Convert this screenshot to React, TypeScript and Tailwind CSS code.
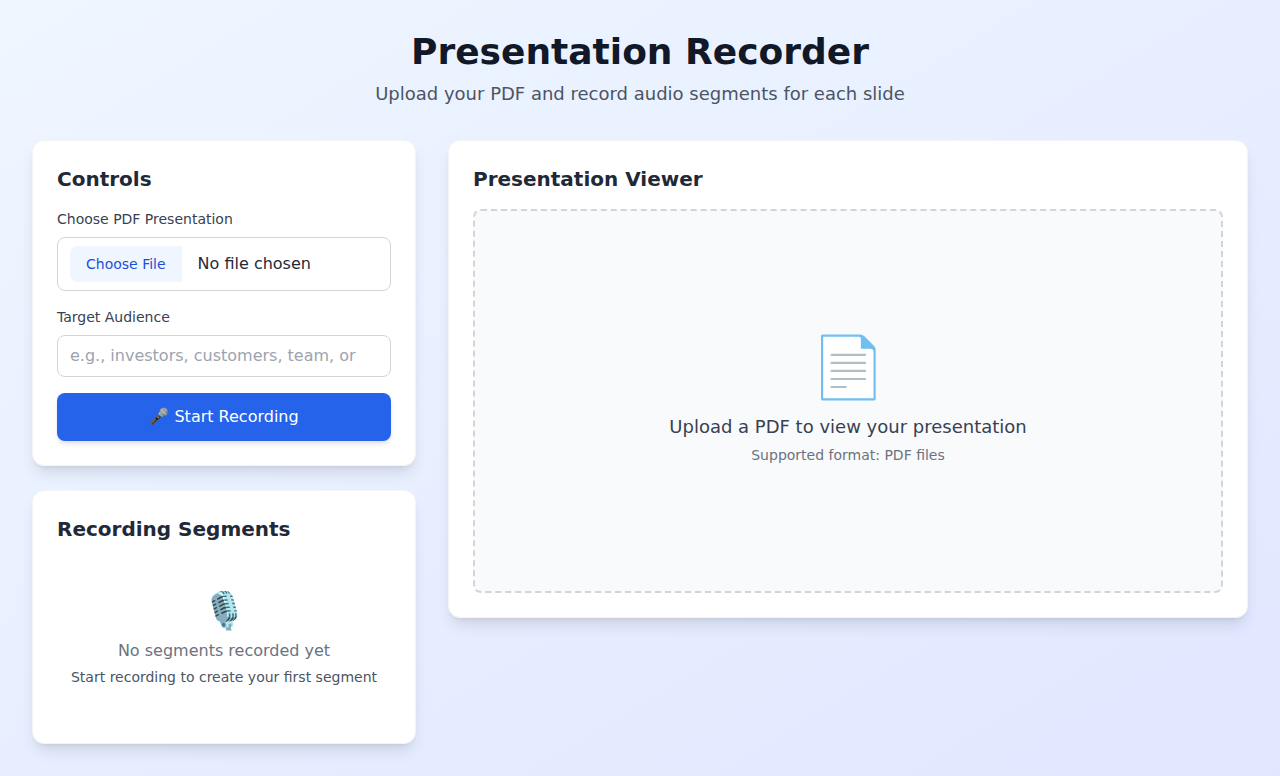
import React from 'react';

const card = 'rounded-xl border border-[#f3f4f6] bg-white p-6 shadow-lg';
const heading = 'mb-4 text-xl font-semibold text-[#1f2937]';
const label = 'mb-2 block text-sm font-medium text-[#374151]';

export default function App() {
  return (
    <div className="min-h-screen bg-[linear-gradient(to_bottom_right,#eff6ff,#e0e7ff)] font-['DejaVu_Sans',sans-serif] text-[#111827]">
      <div className="mx-auto max-w-7xl px-8 py-8">
        <header className="mb-8 text-center">
          <h1 className="mb-2 text-4xl font-bold">Presentation Recorder</h1>
          <p className="text-lg text-[#4b5563]">Upload your PDF and record audio segments for each slide</p>
        </header>
        <div className="grid grid-cols-3 items-start gap-8">
          <div className="space-y-6">
            <section className={card}>
              <h2 className={heading}>Controls</h2>
              <div className="space-y-4">
                <div>
                  <label htmlFor="pdf" className={label}>Choose PDF Presentation</label>
                  <input
                    id="pdf"
                    type="file"
                    accept="application/pdf"
                    className="block w-full rounded-lg border border-[#d1d5db] px-3 py-2 text-[#1f2937] file:mr-4 file:rounded-l-lg file:border-0 file:bg-[#eff6ff] file:px-4 file:py-2 file:text-sm file:font-medium file:text-[#1d4ed8]"
                  />
                </div>
                <div>
                  <label htmlFor="audience" className={label}>Target Audience</label>
                  <input
                    id="audience"
                    type="text"
                    placeholder="e.g., investors, customers, team, or"
                    className="block w-full rounded-lg border border-[#d1d5db] px-3 py-2 placeholder:text-[#9ca3af]"
                  />
                </div>
                <button className="w-full rounded-lg bg-[#2563eb] px-4 py-3 font-medium text-white shadow-md">🎤 Start Recording</button>
              </div>
            </section>
            <section className={card}>
              <h2 className={heading}>Recording Segments</h2>
              <div className="py-8 text-center text-[#6b7280]">
                <div className="mb-2 text-4xl">🎙️</div>
                <p>No segments recorded yet</p>
                <p className="mt-1 text-sm text-[#4b5563]">Start recording to create your first segment</p>
              </div>
            </section>
          </div>
          <section className={`${card} col-span-2`}>
            <h2 className={heading}>Presentation Viewer</h2>
            <div className="flex h-96 items-center justify-center rounded-lg border-2 border-dashed border-[#d1d5db] bg-[#f9fafb]">
              <div className="text-center">
                <div className="mb-4 text-6xl">📄</div>
                <p className="text-lg text-[#374151]">Upload a PDF to view your presentation</p>
                <p className="mt-1 text-sm text-[#6b7280]">Supported format: PDF files</p>
              </div>
            </div>
          </section>
        </div>
      </div>
    </div>
  );
}
